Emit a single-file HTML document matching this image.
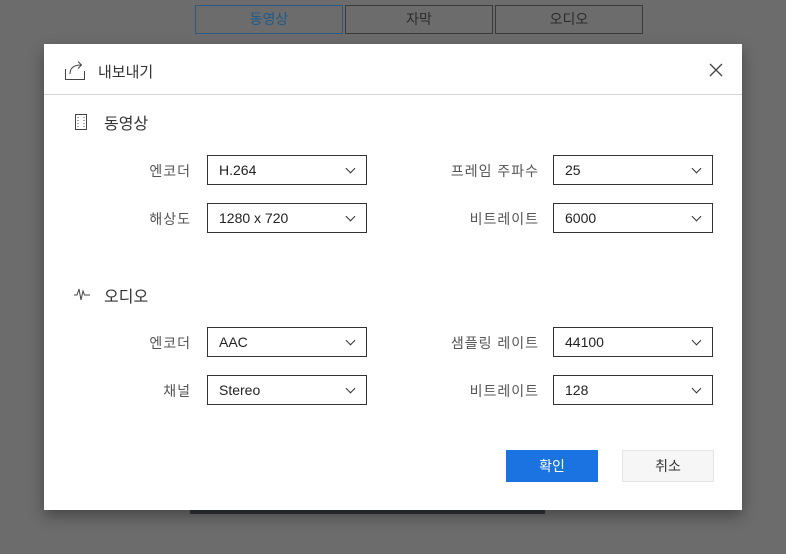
<!DOCTYPE html>
<html><head><meta charset="utf-8"><style>
*{margin:0;padding:0;box-sizing:border-box}
body{width:786px;height:554px;background:#6c6c6c;position:relative;overflow:hidden;font-family:"Liberation Sans","Noto Sans CJK KR",sans-serif;}
.tab{position:absolute;top:5px;height:29px;border:1px solid #3a3a3a;color:#2b2b2b;font-size:14px;text-align:center;line-height:27px}
.dlg{position:absolute;left:44px;top:44px;width:698px;height:466px;background:#fff;box-shadow:0 6px 14px rgba(0,0,0,.35)}
.hdr{position:absolute;left:0;top:0;width:698px;height:51px;border-bottom:1px solid #d6d6d6}
.t{position:absolute;font-size:14px;color:#333}
.lbl{position:absolute;font-size:14px;color:#555;text-align:right;letter-spacing:1px}
.sel{position:absolute;width:160px;height:30px;border:1px solid #333;font-size:14px;color:#222;padding-left:11px;line-height:29px}
.sel:after{content:"";position:absolute;right:12px;top:9px;width:6px;height:6px;border-right:1px solid #333;border-bottom:1px solid #333;transform:rotate(45deg)}
.btn{position:absolute;top:406px;width:92px;height:32px;font-size:14px;text-align:center;line-height:32px}
</style></head><body>
<div class="tab" style="left:195px;width:148px;border-color:#2c5a85;color:#1f5a8a">동영상</div>
<div class="tab" style="left:345px;width:148px">자막</div>
<div class="tab" style="left:495px;width:148px">오디오</div>
<div style="position:absolute;left:190px;top:508px;width:355px;height:6px;background:#2f3338"></div>
<div class="dlg">
<div class="hdr">
<svg style="position:absolute;left:20px;top:15px" width="24" height="22" viewBox="0 0 24 22" fill="none" stroke="#444" stroke-width="1"><path d="M1.5 10v10.5h19V12"/><path d="M6 15c0-6 4-9 11-9"/><path d="M14 2.5l3.5 3.5-3.5 3.5"/></svg>
<div class="t" style="left:54px;top:17px;font-size:15px">내보내기</div>
<svg style="position:absolute;left:665px;top:19px" width="14" height="14" stroke="#444" stroke-width="1.3"><path d="M1 1l12 12M13 1L1 13"/></svg>
</div>
<svg style="position:absolute;left:31px;top:70px" width="12" height="16" fill="none" stroke="#444"><rect x="0.5" y="0.5" width="11" height="15"/><path d="M3 3v10M9 3v10" stroke-dasharray="1 2"/></svg>
<div class="t" style="left:60px;top:66px;font-size:16px">동영상</div>
<div class="lbl" style="left:60px;width:87px;top:117px">엔코더</div>
<div class="sel" style="left:163px;top:111px">H.264</div>
<div class="lbl" style="left:360px;width:135px;top:117px">프레임 주파수</div>
<div class="sel" style="left:509px;top:111px">25</div>
<div class="lbl" style="left:60px;width:87px;top:165px">해상도</div>
<div class="sel" style="left:163px;top:159px">1280 x 720</div>
<div class="lbl" style="left:360px;width:135px;top:165px">비트레이트</div>
<div class="sel" style="left:509px;top:159px">6000</div>
<svg style="position:absolute;left:30px;top:243px" width="16" height="14" fill="none" stroke="#444" stroke-width="1"><path d="M0 8h3l2-6 2 11 2-9 1.5 4H16"/></svg>
<div class="t" style="left:60px;top:239px;font-size:16px">오디오</div>
<div class="lbl" style="left:60px;width:87px;top:289px">엔코더</div>
<div class="sel" style="left:163px;top:283px">AAC</div>
<div class="lbl" style="left:360px;width:135px;top:289px">샘플링 레이트</div>
<div class="sel" style="left:509px;top:283px">44100</div>
<div class="lbl" style="left:60px;width:87px;top:337px">채널</div>
<div class="sel" style="left:163px;top:331px">Stereo</div>
<div class="lbl" style="left:360px;width:135px;top:337px">비트레이트</div>
<div class="sel" style="left:509px;top:331px">128</div>
<div class="btn" style="left:462px;background:#1a73e0;color:#fff">확인</div>
<div class="btn" style="left:578px;background:#f6f6f6;border:1px solid #e4e4e4;color:#333;line-height:30px">취소</div>
</div>
</body></html>
